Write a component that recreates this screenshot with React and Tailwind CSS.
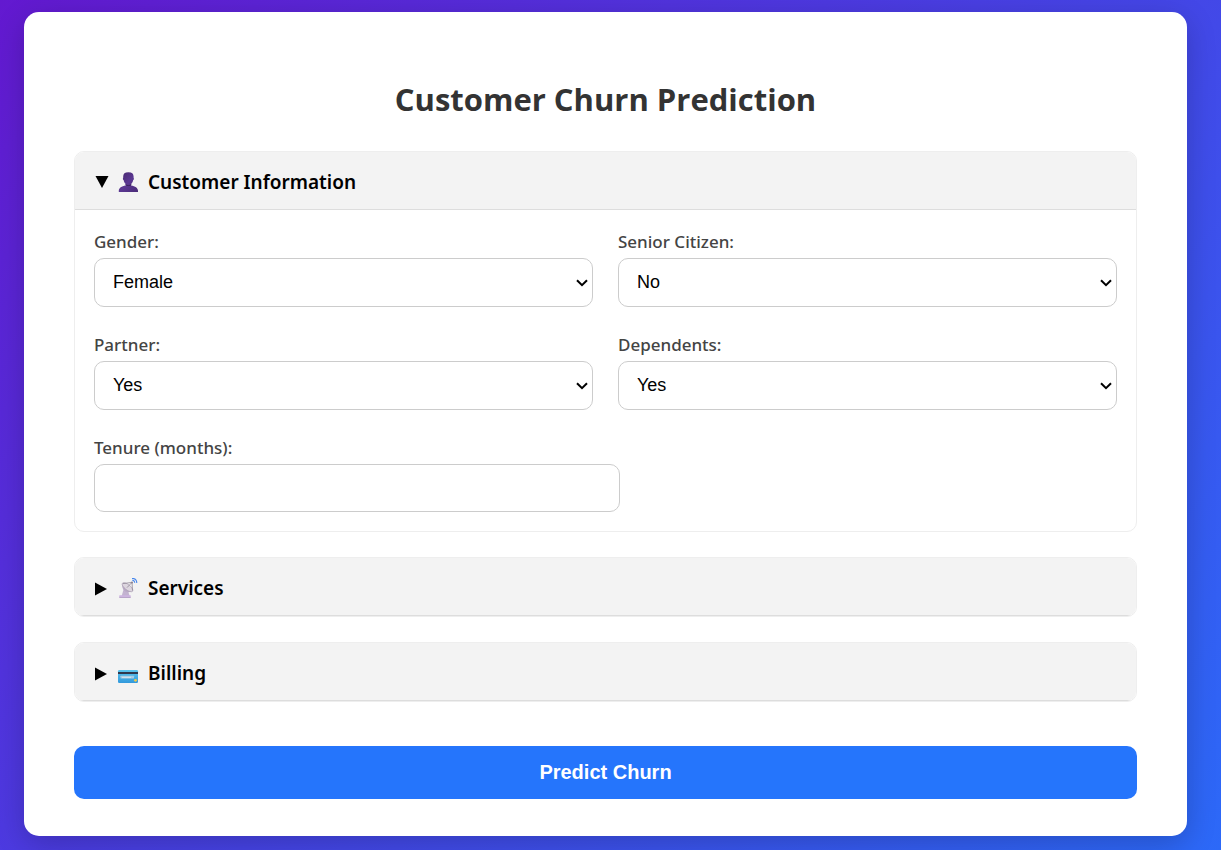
import { useId, useState } from "react";

const CONTROL =
  "block w-full appearance-none rounded-[10px] border border-[#ccc] bg-white px-[18px] font-['Liberation_Sans',Arial,sans-serif] text-lg text-black";
const LABEL = "mb-[5px] block text-[17px] leading-[23px] font-medium text-[#444]";

function SelectField({ label, options, value }) {
  const id = useId();
  return (
    <div>
      <label htmlFor={id} className={LABEL}>
        {label}
      </label>
      <div className="relative">
        <select id={id} defaultValue={value} className={`${CONTROL} h-[49px] pb-0.5`}>
          {options.map((option) => (
            <option key={option}>{option}</option>
          ))}
        </select>
        <svg
          viewBox="0 0 12 8"
          className="pointer-events-none absolute top-[21px] right-[5px] h-2 w-3"
          aria-hidden="true"
        >
          <path d="M1 1.200 6 6.200 11 1.200" fill="none" stroke="#000" strokeWidth="2" />
        </svg>
      </div>
    </div>
  );
}

function NumberField({ label }) {
  const id = useId();
  return (
    <div>
      <label htmlFor={id} className={LABEL}>
        {label}
      </label>
      <div className="-mr-[27px]">
        <input id={id} type="number" className={`${CONTROL} h-12`} />
      </div>
    </div>
  );
}

function PersonIcon() {
  return (
    <svg viewBox="0 0 22 22" className="size-[22px]" aria-hidden="true">
      <defs>
        <linearGradient id="person" x1="0" y1="0" x2="1" y2="1">
          <stop offset="0" stopColor="#432568" />
          <stop offset="0.5" stopColor="#5b3892" />
          <stop offset="1" stopColor="#4a2b78" />
        </linearGradient>
      </defs>
      <path
        d="M11.400 0.200c3.600 0 5.200 1.500 5.200 4.200 0 .7-.1 1.200.2 1.800.3.8 0 1.600-.6 1.900-.3 1.800-1 3.100-2.100 4v1.300c4 .6 6.900 2.600 6.900 5.300V20H1.800v-1.300c0-2.700 2.900-4.700 6.900-5.300v-1.300c-1.100-.9-1.800-2.200-2.100-4-.6-.3-.9-1.100-.6-1.900.3-.6.2-1.100.2-1.800C6.200 1.700 7.800.2 11.400.2Z"
        fill="url(#person)"
      />
      <path d="M8.500 12.600c1.700 1.300 4.100 1.300 5.800 0" fill="none" stroke="#352052" strokeWidth="0.900" />
    </svg>
  );
}

function SatelliteIcon() {
  return (
    <svg viewBox="0 0 22 22" className="size-[22px]" aria-hidden="true">
      <path d="m6.500 11.500-1.800 6.500h8l-1.700-5Z" fill="#c3b3d0" />
      <rect x="2.200" y="17.200" width="11.600" height="2.700" rx="0.600" fill="#cdb5df" />
      <path d="M2.400 19.500h11.200" stroke="#a99abb" strokeWidth="0.600" />
      <path d="M5.300 5.200c-.5 3 .1 5.800 2.200 7.600 2.300 1.900 5.600 1.900 8.100.3Z" fill="#b9a9c5" />
      <ellipse cx="10.500" cy="9.200" rx="6.500" ry="2.700" transform="rotate(38 10.500 9.200)" fill="#ddd6df" stroke="#a89caf" strokeWidth="0.600" />
      <path d="m6 5.600 9-1.200.5 8.100M10 9.600l5-5.200" fill="none" stroke="#8f8795" strokeWidth="0.800" />
      <circle cx="15" cy="4.500" r="1" fill="#8b8390" />
      <path d="M15.300 2.300c1.400.1 2.300 1 2.400 2.500M15 0.400c2.900 0 4.800 1.800 4.800 4.700" fill="none" stroke="#4686ec" strokeWidth="1.100" />
    </svg>
  );
}

function CardIcon() {
  return (
    <svg viewBox="0 0 22 22" className="size-[22px]" aria-hidden="true">
      <defs>
        <linearGradient id="card" x1="0" y1="0" x2="0" y2="1">
          <stop offset="0" stopColor="#5cc4ec" />
          <stop offset="1" stopColor="#3299dc" />
        </linearGradient>
      </defs>
      <rect x="1" y="7" width="20" height="13" rx="1.300" fill="url(#card)" />
      <path d="M1 9h20v2H1Z" fill="#30384d" />
      <rect x="3.500" y="12.800" width="13.500" height="2.700" rx="0.400" fill="#a9cce3" />
      <path d="M5 14.300h9" stroke="#dbe6ee" strokeWidth="1" />
      <circle cx="18.500" cy="17.300" r="1.400" fill="#f0c64a" />
    </svg>
  );
}

function Section({ title, icon, initiallyOpen = false, children }) {
  const [open, setOpen] = useState(initiallyOpen);
  return (
    <details
      open={open}
      onToggle={(event) => setOpen(event.currentTarget.open)}
      className="group mb-[25px] overflow-hidden rounded-[10px] border border-[#eee] bg-white"
    >
      <summary className="flex h-[58px] cursor-pointer list-none items-center border-b border-[#ddd] bg-[#f3f3f3] pt-1 pl-5 text-[19px] font-semibold text-black">
        <svg viewBox="0 0 14 14" className="mr-2 size-3.5 group-open:rotate-90" aria-hidden="true">
          <path d="M0 0.500 12 7 0 13.500Z" fill="#000" />
        </svg>
        {icon}
        <span className="ml-[9px]">{title}</span>
      </summary>
      {open && (
        <div className="grid grid-cols-2 gap-x-[25px] gap-y-[26px] px-[19px] pt-5 pb-[19px]">{children}</div>
      )}
    </details>
  );
}

const YES_NO = ["Yes", "No"];

export default function App() {
  return (
    <div className="min-h-screen bg-[linear-gradient(135deg,#6319d0,#2c69f8)] pt-3 pr-[34px] pb-3.5 pl-6 font-['Noto_Sans','Open_Sans',sans-serif]">
      <main className="rounded-[15px] bg-white px-[50px] pt-16 pb-[37px] shadow-[0_8px_30px_rgba(0,0,0,0.2)]">
        <h1 className="mb-[29px] text-center font-['Open_Sans','Noto_Sans',sans-serif] text-[31px] leading-[46px] font-bold text-[#333]">
          Customer Churn Prediction
        </h1>
        <form onSubmit={(event) => event.preventDefault()}>
          <Section title="Customer Information" icon={<PersonIcon />} initiallyOpen>
            <SelectField label="Gender:" options={["Female", "Male"]} value="Female" />
            <SelectField label="Senior Citizen:" options={YES_NO} value="No" />
            <SelectField label="Partner:" options={YES_NO} value="Yes" />
            <SelectField label="Dependents:" options={YES_NO} value="Yes" />
            <NumberField label="Tenure (months):" />
          </Section>
          <Section title="Services" icon={<SatelliteIcon />} />
          <Section title="Billing" icon={<CardIcon />} />
          <button
            type="submit"
            className="mt-[19px] h-[53px] w-full cursor-pointer rounded-[10px] bg-[#2575fc] pb-0.5 font-['Liberation_Sans',Arial,sans-serif] text-xl font-bold text-white"
          >
            Predict Churn
          </button>
        </form>
      </main>
    </div>
  );
}
